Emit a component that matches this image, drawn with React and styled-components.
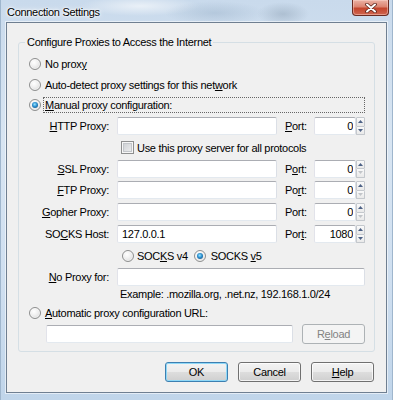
import React from "react";
import styled, { createGlobalStyle, css } from "styled-components";

const GlobalStyle = createGlobalStyle`
  html, body { margin: 0; padding: 0; }
  body {
    font-family: "Liberation Sans", Arial, sans-serif;
    font-size: 11px;
    letter-spacing: -0.3px;
    color: #000;
  }
  * { box-sizing: border-box; }
`;

const Window = styled.div`
  width: 393px;
  height: 400px;
  display: flex;
  flex-direction: column;
  padding: 0 6px 7px 6px;
  background:
    radial-gradient(ellipse 50px 12px at 215px 13px, rgba(140, 165, 190, 0.35), transparent),
    radial-gradient(ellipse 26px 12px at 283px 14px, rgba(120, 140, 160, 0.35), transparent),
    radial-gradient(ellipse 60px 10px at 140px 6px, rgba(255, 255, 255, 0.6), transparent),
    linear-gradient(180deg, #c9daec 0%, #d8e5f2 35%, #cfdff0 70%, #c0d5ea 100%);
  box-shadow: inset 1px 0 0 #9fb6cd, inset -1px 0 0 #9fb6cd;
`;

const TitleBar = styled.div`
  height: 22px;
  display: flex;
  align-items: flex-start;
  justify-content: space-between;
`;

const Title = styled.span`
  margin: 5px 0 0 1px;
  line-height: 14px;
  text-shadow: 0 0 6px #fff, 0 0 3px #fff, 0 0 2px #fff;
`;

const CloseButton = styled.div`
  width: 37px;
  height: 16px;
  margin-right: -2px;
  border: 1px solid #6a2b22;
  border-top: none;
  border-radius: 0 0 4px 4px;
  background: linear-gradient(180deg, #ebb2a5 0%, #dc8471 45%, #c4452d 55%, #cf6650 100%);
  box-shadow: inset 0 0 0 1px rgba(255, 220, 210, 0.45);
  display: flex;
  align-items: center;
  justify-content: center;
`;

const Client = styled.div`
  flex: 1;
  display: flex;
  flex-direction: column;
  background: #f0f0f0;
  border: 1px solid #6f7f91;
  box-shadow: 0 0 0 1px rgba(255, 255, 255, 0.55);
`;

const Group = styled.fieldset`
  margin: 12px 11px 0 11px;
  padding: 5px 8px 7px 10px;
  border: 1px solid #d5dfe5;
  border-radius: 3px;
  min-width: 0;
`;

const Legend = styled.legend`
  padding: 0 2px;
  margin-left: -4px;
  line-height: 14px;
`;

const Row = styled.div`
  height: ${(p) => p.$h}px;
  display: flex;
  align-items: center;
  gap: ${(p) => p.$gap ?? 4}px;
  padding-left: ${(p) => p.$indent || 0}px;
`;

const RadioDot = styled.span`
  position: relative;
  flex: none;
  width: 12px;
  height: 12px;
  border-radius: 50%;
  border: 1px solid #8e8f8f;
  background: radial-gradient(circle at 40% 35%, #ffffff 0%, #f1f1f1 40%, #d3d3d3 100%);
  box-shadow: inset 0 0 0 1px rgba(255, 255, 255, 0.5);
  ${(p) =>
    p.$checked &&
    css`
      &::after {
        content: "";
        position: absolute;
        left: 2px;
        top: 2px;
        width: 6px;
        height: 6px;
        border-radius: 50%;
        background: radial-gradient(circle at 45% 40%, #9ae6ff 0%, #2b8fd0 45%, #0c3d68 100%);
      }
    `}
`;

const FocusLabel = styled.span`
  flex: 1;
  height: 16px;
  margin-right: 1px;
  padding: 0 1px;
  border: 1px dotted #666;
  display: flex;
  align-items: center;
`;

const Check = styled.span`
  flex: none;
  width: 13px;
  height: 13px;
  border: 1px solid #8e8f8f;
  background: linear-gradient(135deg, #c9ccd0 0%, #f2f2f2 100%);
  box-shadow: inset 0 0 0 1px #f6f6f6, inset 0 0 0 2px #c3c6ca;
`;

const ProxyGrid = styled.div`
  display: grid;
  grid-template-columns: 80px 160px 21px 51px;
  grid-template-rows: 22px 21px 21px 22px 22px 22px 22px 19px 16px;
  column-gap: 8px;
  align-items: center;
`;

const FieldLabel = styled.span`
  text-align: right;
  white-space: nowrap;
`;

const PortLabel = styled.span`
  white-space: nowrap;
`;

const Span = styled.div`
  grid-column: 2 / 5;
  display: flex;
  align-items: center;
  gap: ${(p) => p.$gap ?? 3}px;
  padding-left: ${(p) => p.$indent || 0}px;
`;

const TextBox = styled.input`
  width: ${(p) => (p.$w ? `${p.$w}px` : "100%")};
  height: 18px;
  margin: 0;
  padding: 0 ${(p) => (p.$right ? 2 : 4)}px;
  border: 1px solid;
  border-color: #abadb3 #dbdfe6 #e3e9ef #e2e3ea;
  border-radius: 2px;
  background: #fff;
  font: inherit;
  letter-spacing: inherit;
  color: #000;
  text-align: ${(p) => (p.$right ? "right" : "left")};
  outline: none;
`;

const PortBox = styled.div`
  display: flex;
  height: 18px;
`;

const Spinner = styled.div`
  width: 9px;
  display: flex;
  flex-direction: column;
`;

const SpinButton = styled.div`
  flex: 1;
  display: flex;
  align-items: center;
  justify-content: center;
  border: 1px solid #c4c8cd;
  border-radius: 1px;
  background: linear-gradient(180deg, #fafafa 0%, #e9e9e9 100%);
  & + & {
    border-top: none;
  }
`;

const UrlRow = styled.div`
  height: 20px;
  display: flex;
  align-items: center;
  gap: 9px;
  padding-left: 17px;
`;

const Button = styled.div`
  width: ${(p) => p.$w || 63}px;
  height: 20px;
  display: flex;
  align-items: center;
  justify-content: center;
  border: 1px solid #707070;
  border-radius: 3px;
  background: linear-gradient(180deg, #f3f3f3 0%, #ebebeb 48%, #dddddd 52%, #cfcfcf 100%);
  box-shadow: inset 0 0 0 1px rgba(255, 255, 255, 0.75);
  color: #000;
  ${(p) =>
    p.$default &&
    css`
      border-color: #3c7fb1;
      box-shadow: inset 0 0 0 1px #8fd8f7;
    `}
  ${(p) =>
    p.$disabled &&
    css`
      border-color: #adb2b5;
      background: #f4f4f4;
      box-shadow: none;
      color: #838383;
    `}
`;

const ButtonRow = styled.div`
  display: flex;
  justify-content: flex-end;
  gap: 10px;
  margin-top: 10px;
  padding-right: 12px;
`;

const Arrow = ({ up, enabled }) => (
  <svg width="5" height="3" viewBox="0 0 5 3">
    <polygon
      points={up ? "0,3 5,3 2.5,0" : "0,0 5,0 2.5,3"}
      fill={enabled ? "#4d6185" : "#c2c5c9"}
    />
  </svg>
);

const Port = ({ value, downEnabled }) => (
  <PortBox>
    <TextBox $w={42} $right readOnly defaultValue={value} />
    <Spinner>
      <SpinButton>
        <Arrow up enabled />
      </SpinButton>
      <SpinButton>
        <Arrow enabled={downEnabled} />
      </SpinButton>
    </Spinner>
  </PortBox>
);

const proxies = [
  { label: <><u>H</u>TTP Proxy:</>, port: <><u>P</u>ort:</>, value: "", portValue: "0", down: true },
  null,
  { label: <><u>S</u>SL Proxy:</>, port: <>P<u>o</u>rt:</>, value: "", portValue: "0" },
  { label: <><u>F</u>TP Proxy:</>, port: <>Po<u>r</u>t:</>, value: "", portValue: "0" },
  { label: <><u>G</u>opher Proxy:</>, port: <>Port:</>, value: "", portValue: "0" },
  { label: <>SO<u>C</u>KS Host:</>, port: <>Por<u>t</u>:</>, value: "127.0.0.1", portValue: "1080", down: true },
];

export default function App() {
  return (
    <>
      <GlobalStyle />
      <Window>
        <TitleBar>
          <Title>Connection Settings</Title>
          <CloseButton>
            <svg width="12" height="10" viewBox="0 0 12 10">
              <path d="M2 1.5 L10 8.5 M10 1.5 L2 8.5" stroke="#5a231a" strokeWidth="3.6" strokeLinecap="round" />
              <path d="M2 1.5 L10 8.5 M10 1.5 L2 8.5" stroke="#ffffff" strokeWidth="2" strokeLinecap="round" />
            </svg>
          </CloseButton>
        </TitleBar>
        <Client>
          <Group>
            <Legend>Configure Proxies to Access the Internet</Legend>
            <Row $h={20}>
              <RadioDot />
              <span>No prox<u>y</u></span>
            </Row>
            <Row $h={21}>
              <RadioDot />
              <span>Auto-detect proxy settings for this net<u>w</u>ork</span>
            </Row>
            <Row $h={20} $gap={2}>
              <RadioDot $checked />
              <FocusLabel>
                <span><u>M</u>anual proxy configuration:</span>
              </FocusLabel>
            </Row>
            <ProxyGrid>
              {proxies.map((p, i) =>
                p ? (
                  <React.Fragment key={i}>
                    <FieldLabel>{p.label}</FieldLabel>
                    <TextBox readOnly defaultValue={p.value} />
                    <PortLabel>{p.port}</PortLabel>
                    <Port value={p.portValue} downEnabled={p.down} />
                  </React.Fragment>
                ) : (
                  <Span key={i} $indent={4}>
                    <Check />
                    <span>Use this proxy server for all protocols</span>
                  </Span>
                )
              )}
              <Span $indent={5} $gap={0}>
                <Row $h={22} $gap={3}>
                  <RadioDot />
                  <span>SOC<u>K</u>S v4</span>
                </Row>
                <Row $h={22} $gap={5} $indent={6}>
                  <RadioDot $checked />
                  <span>SOCKS <u>v</u>5</span>
                </Row>
              </Span>
              <FieldLabel><u>N</u>o Proxy for:</FieldLabel>
              <Span $gap={0}>
                <TextBox readOnly defaultValue="" $w={249} />
              </Span>
              <Span $indent={3}>Example: .mozilla.org, .net.nz, 192.168.1.0/24</Span>
            </ProxyGrid>
            <Row $h={22}>
              <RadioDot />
              <span><u>A</u>utomatic proxy configuration URL:</span>
            </Row>
            <UrlRow>
              <TextBox readOnly defaultValue="" $w={247} />
              <Button $w={63} $disabled>R<u>e</u>load</Button>
            </UrlRow>
          </Group>
          <ButtonRow>
            <Button $default>OK</Button>
            <Button>Cancel</Button>
            <Button><u>H</u>elp</Button>
          </ButtonRow>
        </Client>
      </Window>
    </>
  );
}
